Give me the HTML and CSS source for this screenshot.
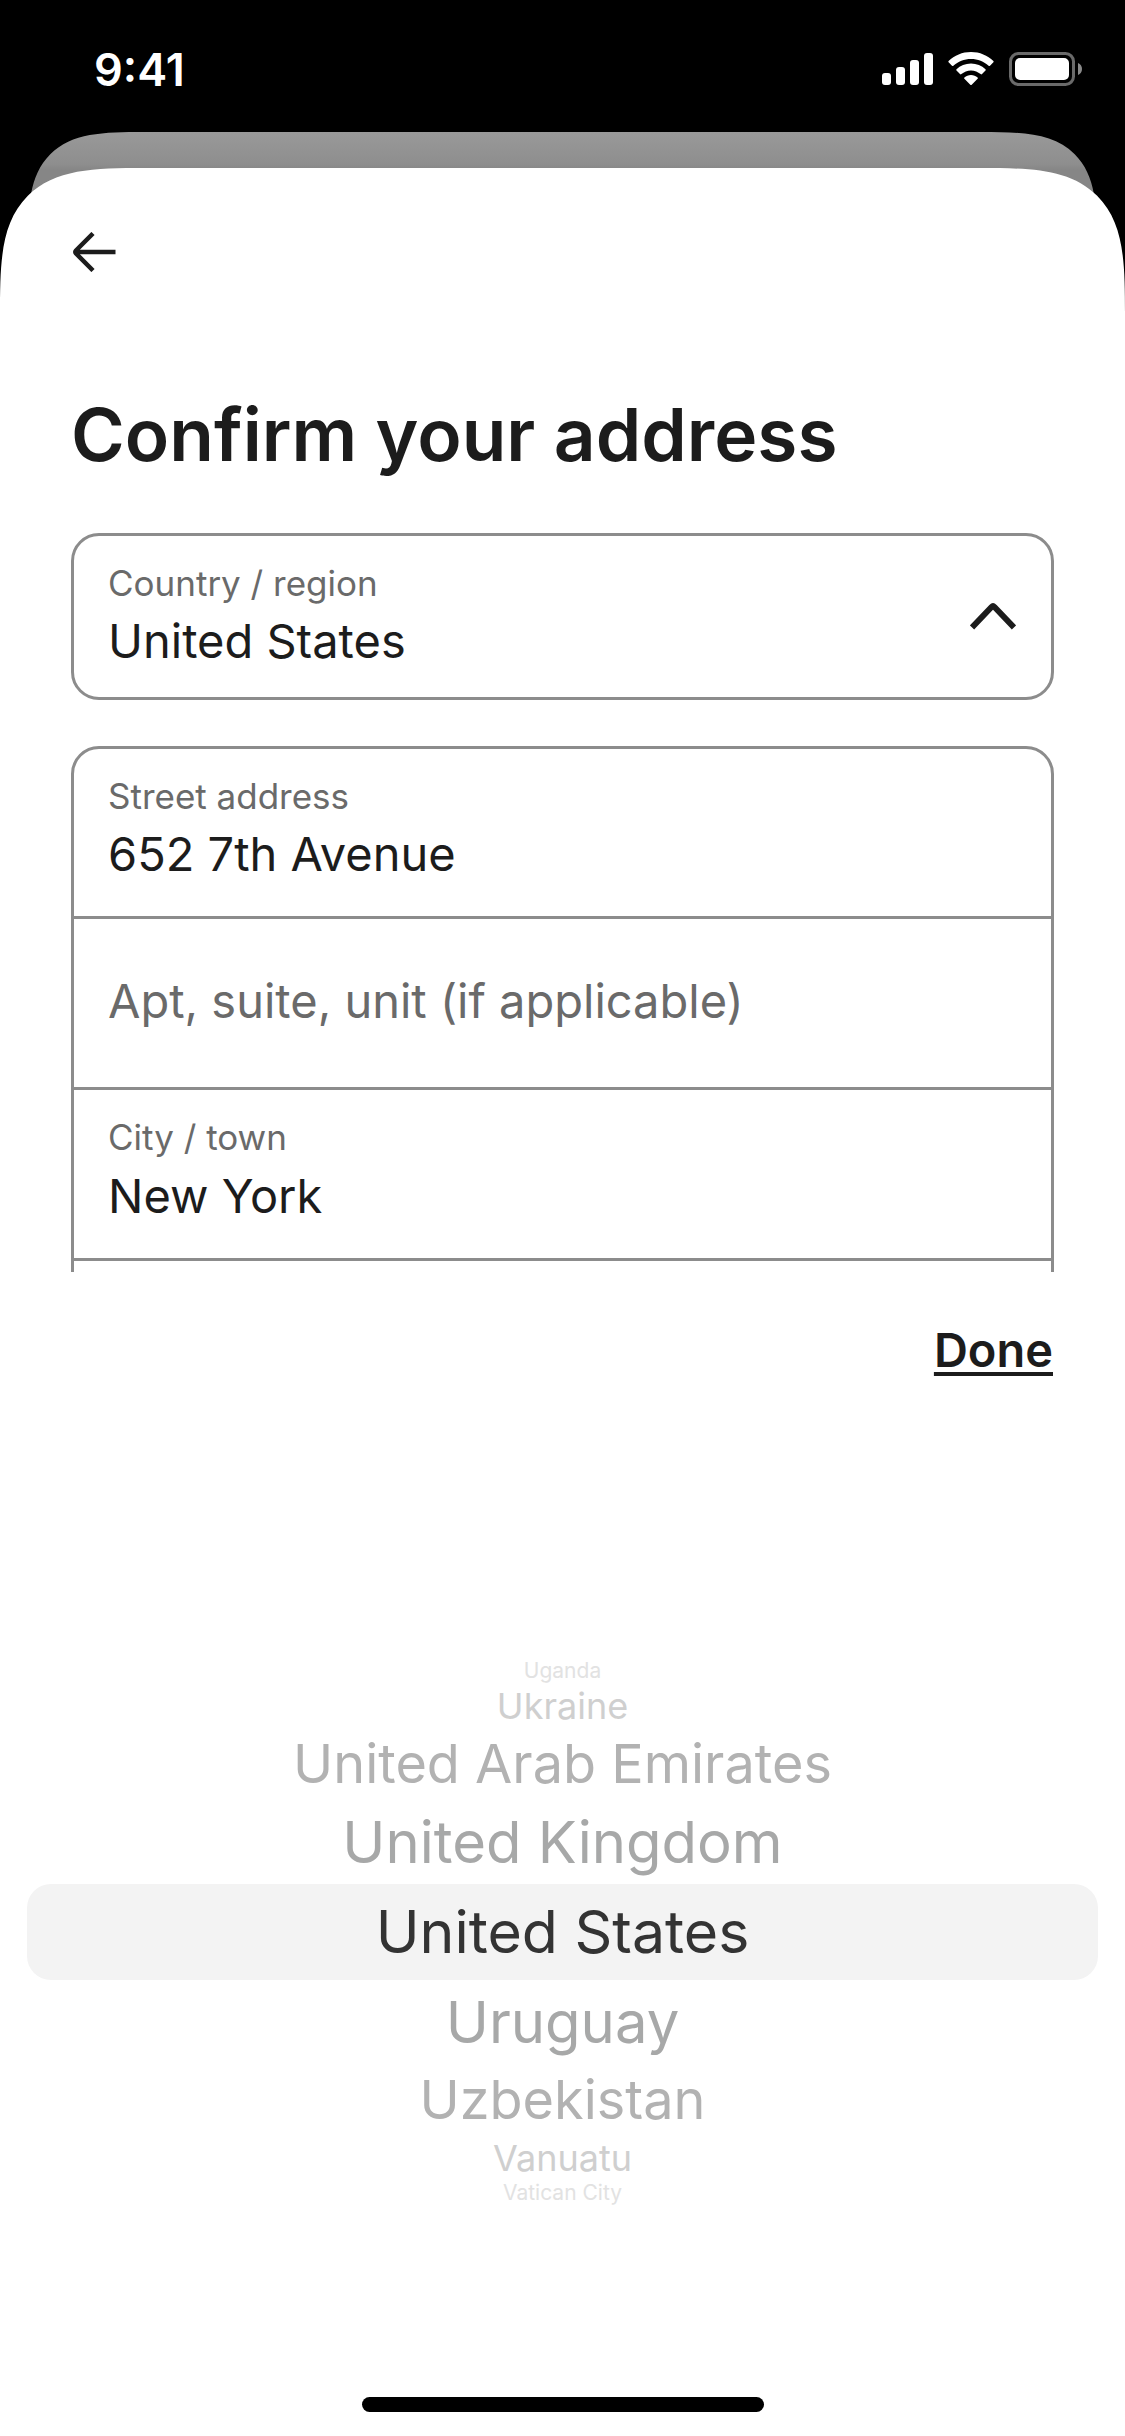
FILE: index.html
```html
<!DOCTYPE html>
<html lang="en">
<head>
    <meta charset="UTF-8">
    <meta name="viewport" content="width=device-width, initial-scale=1.0">
    <title>Confirm your address</title>
    <link rel="stylesheet" href="styles.css">
</head>
<body>
    <div class="status-bar">
        <span class="time">9:41</span>
        <div class="status-icons">
            <svg width="51" height="34" viewBox="0 0 51 34" fill="#fff">
                <rect x="0" y="21" width="9" height="12" rx="3"/>
                <rect x="14" y="15" width="9" height="18" rx="3"/>
                <rect x="28" y="8" width="9" height="25" rx="3"/>
                <rect x="42" y="1" width="9" height="32" rx="3"/>
            </svg>
            <svg width="46" height="34" viewBox="0 0 46 34" fill="#fff">
                <path d="M23 0C31.700 0 39.600 3.400 45.400 8.900Q46 9.600 45.400 10.300L42 13.800Q41.300 14.400 40.600 13.800C36 9.500 29.800 7 23 7S10 9.500 5.400 13.800Q4.700 14.400 4 13.800L.6 10.300Q0 9.600 .6 8.900C6.400 3.400 14.300 0 23 0Z"/>
                <path d="M23 11.600C28.600 11.600 33.700 13.700 37.500 17.200Q38.100 17.900 37.500 18.600L34 22.100Q33.300 22.700 32.600 22.100C30 19.800 26.700 18.400 23 18.400S16 19.800 13.400 22.100Q12.700 22.700 12 22.100L8.500 18.600Q7.900 17.900 8.500 17.200C12.300 13.700 17.400 11.600 23 11.600Z"/>
                <path d="M23 23C25.500 23 27.800 23.900 29.600 25.400Q30.300 26.100 29.600 26.800L23.700 32.700Q23 33.300 22.300 32.700L16.400 26.800Q15.700 26.100 16.400 25.400C18.200 23.900 20.500 23 23 23Z"/>
            </svg>
            <svg class="battery" width="74" height="34" viewBox="0 0 74 34">
                <rect x="1.500" y="1.500" width="63" height="31" rx="8" fill="none" stroke="#6a6a6a" stroke-width="3"/>
                <rect x="6" y="6" width="54" height="22" rx="5" fill="#fff"/>
                <path d="M69 11C71.500 12 73 14.300 73 17S71.500 22 69 23Z" fill="#8a8a8a"/>
            </svg>
        </div>
    </div>

    <div class="backdrop"></div>

    <main class="sheet">
        <button class="back-btn" type="button" aria-label="Back">
            <svg width="44" height="40" viewBox="0 0 44 40" fill="none" stroke="#1c1c1c" stroke-width="4.500">
                <path d="M43.500 20H4M21 1.500L4 18.500Q2.700 20 4 21.500L21 38.500"/>
            </svg>
        </button>

        <form class="address-form">
            <h1>Confirm your address</h1>

            <div class="group">
                <div class="field">
                    <label for="country">Country / region</label>
                    <select id="country">
                        <option>United Kingdom</option>
                        <option selected>United States</option>
                        <option>Uruguay</option>
                    </select>
                    <svg class="chevron" width="46" height="28" viewBox="0 0 46 28" fill="none" stroke="#1c1c1c" stroke-width="6">
                        <path d="M2 25.500L21.500 5Q23 3.500 24.500 5L44 25.500"/>
                    </svg>
                </div>
            </div>

            <div class="group">
                <div class="field">
                    <label for="street">Street address</label>
                    <input type="text" id="street" value="652 7th Avenue">
                </div>
                <div class="field">
                    <input type="text" id="apt" aria-label="Apt, suite, unit" placeholder="Apt, suite, unit (if applicable)">
                </div>
                <div class="field">
                    <label for="city">City / town</label>
                    <input type="text" id="city" value="New York">
                </div>
                <div class="field">
                    <input type="text" id="state" aria-label="State">
                </div>
            </div>
        </form>

        <section class="picker">
            <button class="done-btn" type="button">Done</button>
            <ul class="wheel" role="listbox" aria-label="Country / region">
                <li class="step-4" role="option">Uganda</li>
                <li class="step-3" role="option">Ukraine</li>
                <li class="step-2" role="option">United Arab Emirates</li>
                <li class="step-1" role="option">United Kingdom</li>
                <li class="selected" role="option" aria-selected="true">United States</li>
                <li class="step-1" role="option">Uruguay</li>
                <li class="step-2" role="option">Uzbekistan</li>
                <li class="step-3" role="option">Vanuatu</li>
                <li class="step-4" role="option">Vatican City</li>
            </ul>
            <div class="home-indicator"></div>
        </section>
    </main>
</body>
</html>
```
FILE: styles.css
```css
* {
    margin: 0;
    padding: 0;
    box-sizing: border-box;
}

body {
    font-family: Inter, 'Liberation Sans', sans-serif;
    background: #000;
    color: #1c1c1c;
    height: 100vh;
    display: flex;
    flex-direction: column;
}

button,
input,
select {
    font: inherit;
    color: inherit;
    background: none;
    border: none;
    outline: none;
}

button {
    cursor: pointer;
}

svg {
    display: block;
}

/* Status bar */
.status-bar {
    display: flex;
    justify-content: space-between;
    align-items: center;
    height: 132px;
    padding: 6px 42px 0 94px;
    flex-shrink: 0;
}

.time {
    color: #fff;
    font-size: 45px;
    font-weight: 600;
}

.status-icons {
    display: flex;
    gap: 15px;
}

/* Sheets */
.backdrop {
    height: 150px;
    margin: 0 30px;
    flex-shrink: 0;
    border-radius: 76px 76px 0 0;
    background: linear-gradient(#999 0, #8e8e8e 32px, #868686 38px);
}

.sheet {
    flex: 1;
    min-height: 0;
    margin-top: -114px;
    display: flex;
    flex-direction: column;
    background: #fff;
    border-radius: 96px 96px 0 0;
}

/* smoother corners where the browser has them */
@supports (corner-shape: superellipse(1.7)) {
    .backdrop {
        margin: 0 28px;
        border-radius: 116px 116px 0 0;
        corner-shape: superellipse(1.7);
    }

    .sheet {
        border-radius: 145px 145px 0 0;
        corner-shape: superellipse(1.7);
    }
}

.back-btn {
    align-self: flex-start;
    padding: 64px 72px 0;
}

/* Form */
.address-form {
    flex: 1;
    min-height: 0;
    overflow: hidden;
    padding: 116px 71px 0;
}

h1 {
    font-size: 73px;
    line-height: 94px;
    font-weight: 600;
    margin-bottom: 51px;
}

.group {
    border: 3px solid #8c8c8c;
    border-radius: 28px;
    margin-bottom: 46px;
}

.field {
    position: relative;
    display: flex;
    flex-direction: column;
    justify-content: center;
    height: 171px;
    padding: 0 34px 6px;
}

.field:first-child {
    height: 167px;
}

.field:only-child {
    height: 161px;
    padding-bottom: 0;
}

.field + .field {
    border-top: 3px solid #8c8c8c;
}

.field label {
    color: #6a6a6a;
    font-size: 35px;
    line-height: 48px;
}

.field input,
.field select {
    width: 100%;
    height: 68px;
    font-size: 47px;
    appearance: none;
}

.field input::placeholder {
    color: #6a6a6a;
    opacity: 1;
}

.chevron {
    position: absolute;
    right: 35px;
    top: 66px;
    pointer-events: none;
}

/* Country picker */
.picker {
    display: flex;
    flex-direction: column;
    padding: 44px 27px 24px;
}

.done-btn {
    align-self: flex-end;
    margin-right: 45px;
    font-size: 47px;
    line-height: 68px;
    font-weight: 600;
    text-decoration: underline;
    text-decoration-thickness: 4px;
    text-underline-offset: 5px;
}

.wheel {
    list-style: none;
    margin: 274px 0 191px;
    text-align: center;
}

.wheel .selected {
    font-size: 59px;
    line-height: 96px;
    color: #333;
    background: #f3f3f3;
    border-radius: 24px;
}

.step-1 {
    font-size: 58px;
    line-height: 84px;
    color: #a7a8a8;
}

.step-2 {
    font-size: 54px;
    line-height: 72px;
    color: #b2b2b2;
}

.step-3 {
    font-size: 36px;
    line-height: 44px;
    color: #cfcfcf;
}

.step-4 {
    font-size: 21px;
    line-height: 26px;
    color: #e2e2e2;
}

.home-indicator {
    align-self: center;
    width: 402px;
    height: 15px;
    border-radius: 8px;
    background: #000;
}
```
